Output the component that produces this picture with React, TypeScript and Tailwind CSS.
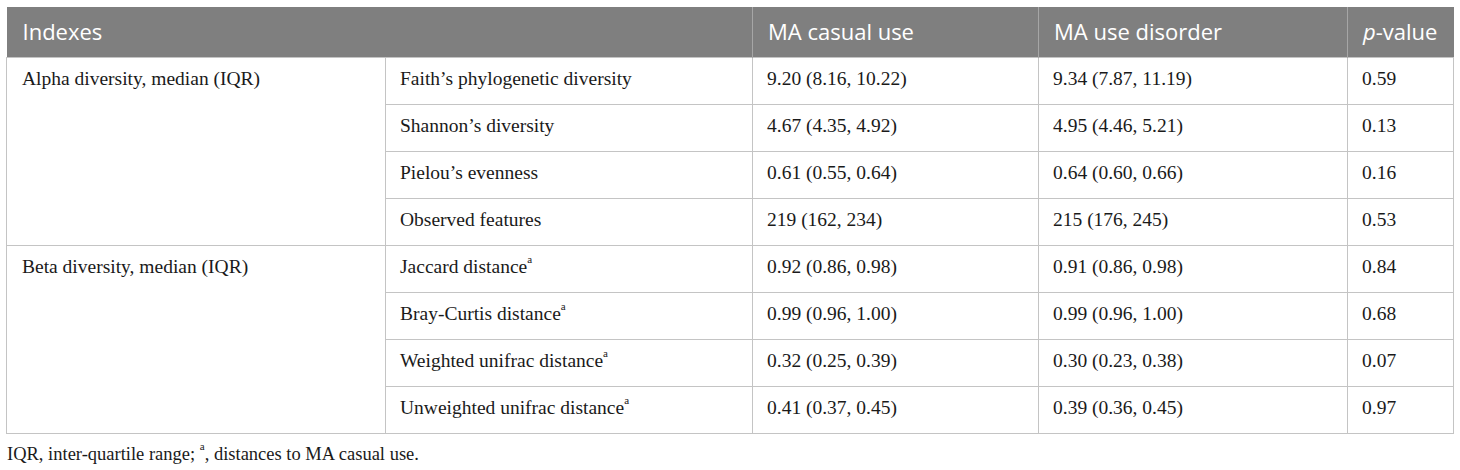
import React from "react";

const serif = { fontFamily: '"Liberation Serif", "Times New Roman", serif' };

type Row = { sub: React.ReactNode; a: string; b: string; p: string };

const Sup = () => <sup className="text-[11px] relative top-[-2px] align-super leading-none">a</sup>;

const alpha: Row[] = [
  { sub: "Faith’s phylogenetic diversity", a: "9.20 (8.16, 10.22)", b: "9.34 (7.87, 11.19)", p: "0.59" },
  { sub: "Shannon’s diversity", a: "4.67 (4.35, 4.92)", b: "4.95 (4.46, 5.21)", p: "0.13" },
  { sub: "Pielou’s evenness", a: "0.61 (0.55, 0.64)", b: "0.64 (0.60, 0.66)", p: "0.16" },
  { sub: "Observed features", a: "219 (162, 234)", b: "215 (176, 245)", p: "0.53" },
];
const beta: Row[] = [
  { sub: <>Jaccard distance<Sup /></>, a: "0.92 (0.86, 0.98)", b: "0.91 (0.86, 0.98)", p: "0.84" },
  { sub: <>Bray-Curtis distance<Sup /></>, a: "0.99 (0.96, 1.00)", b: "0.99 (0.96, 1.00)", p: "0.68" },
  { sub: <>Weighted unifrac distance<Sup /></>, a: "0.32 (0.25, 0.39)", b: "0.30 (0.23, 0.38)", p: "0.07" },
  { sub: <>Unweighted unifrac distance<Sup /></>, a: "0.41 (0.37, 0.45)", b: "0.39 (0.36, 0.45)", p: "0.97" },
];

const td = "border border-[#c4c4c4] h-[47px] align-top pl-[14px] pt-[8px] leading-[26px]";

function Group({ label, rows }: { label: string; rows: Row[] }) {
  return (
    <>
      {rows.map((r, i) => (
        <tr key={i}>
          {i === 0 && (
            <td rowSpan={rows.length} className={td + " pl-[15px]"}>
              {label}
            </td>
          )}
          <td className={td}>{r.sub}</td>
          <td className={td}>{r.a}</td>
          <td className={td}>{r.b}</td>
          <td className={td}>{r.p}</td>
        </tr>
      ))}
    </>
  );
}

export default function App() {
  const th = "h-[50px] text-left font-normal text-white pl-[15px] border-l border-[#a6a6a6]";
  return (
    <div className="bg-white w-[1460px] h-[470px] overflow-hidden pt-[7px] pl-[6px]">
      <table
        className="border-collapse table-fixed w-[1447px] text-[19.5px] text-[#1a1a1a]"
        style={serif}
      >
        <colgroup>
          <col className="w-[379px]" />
          <col className="w-[367px]" />
          <col className="w-[286px]" />
          <col className="w-[309px]" />
          <col className="w-[106px]" />
        </colgroup>
        <thead>
          <tr className="bg-[#7f7f7f] text-[22px]" style={{ fontFamily: '"Open Sans", sans-serif' }}>
            <th colSpan={2} className="h-[50px] text-left font-normal text-white pl-[16px]">
              Indexes
            </th>
            <th className={th}>MA casual use</th>
            <th className={th}>MA use disorder</th>
            <th className={th}>
              <i>p</i>-value
            </th>
          </tr>
        </thead>
        <tbody>
          <Group label="Alpha diversity, median (IQR)" rows={alpha} />
          <Group label="Beta diversity, median (IQR)" rows={beta} />
        </tbody>
      </table>
      <div className="text-[18.5px] text-[#1a1a1a] mt-[8px] pl-[1px] leading-[24px]" style={serif}>
        IQR, inter-quartile range; <Sup />, distances to MA casual use.
      </div>
    </div>
  );
}
